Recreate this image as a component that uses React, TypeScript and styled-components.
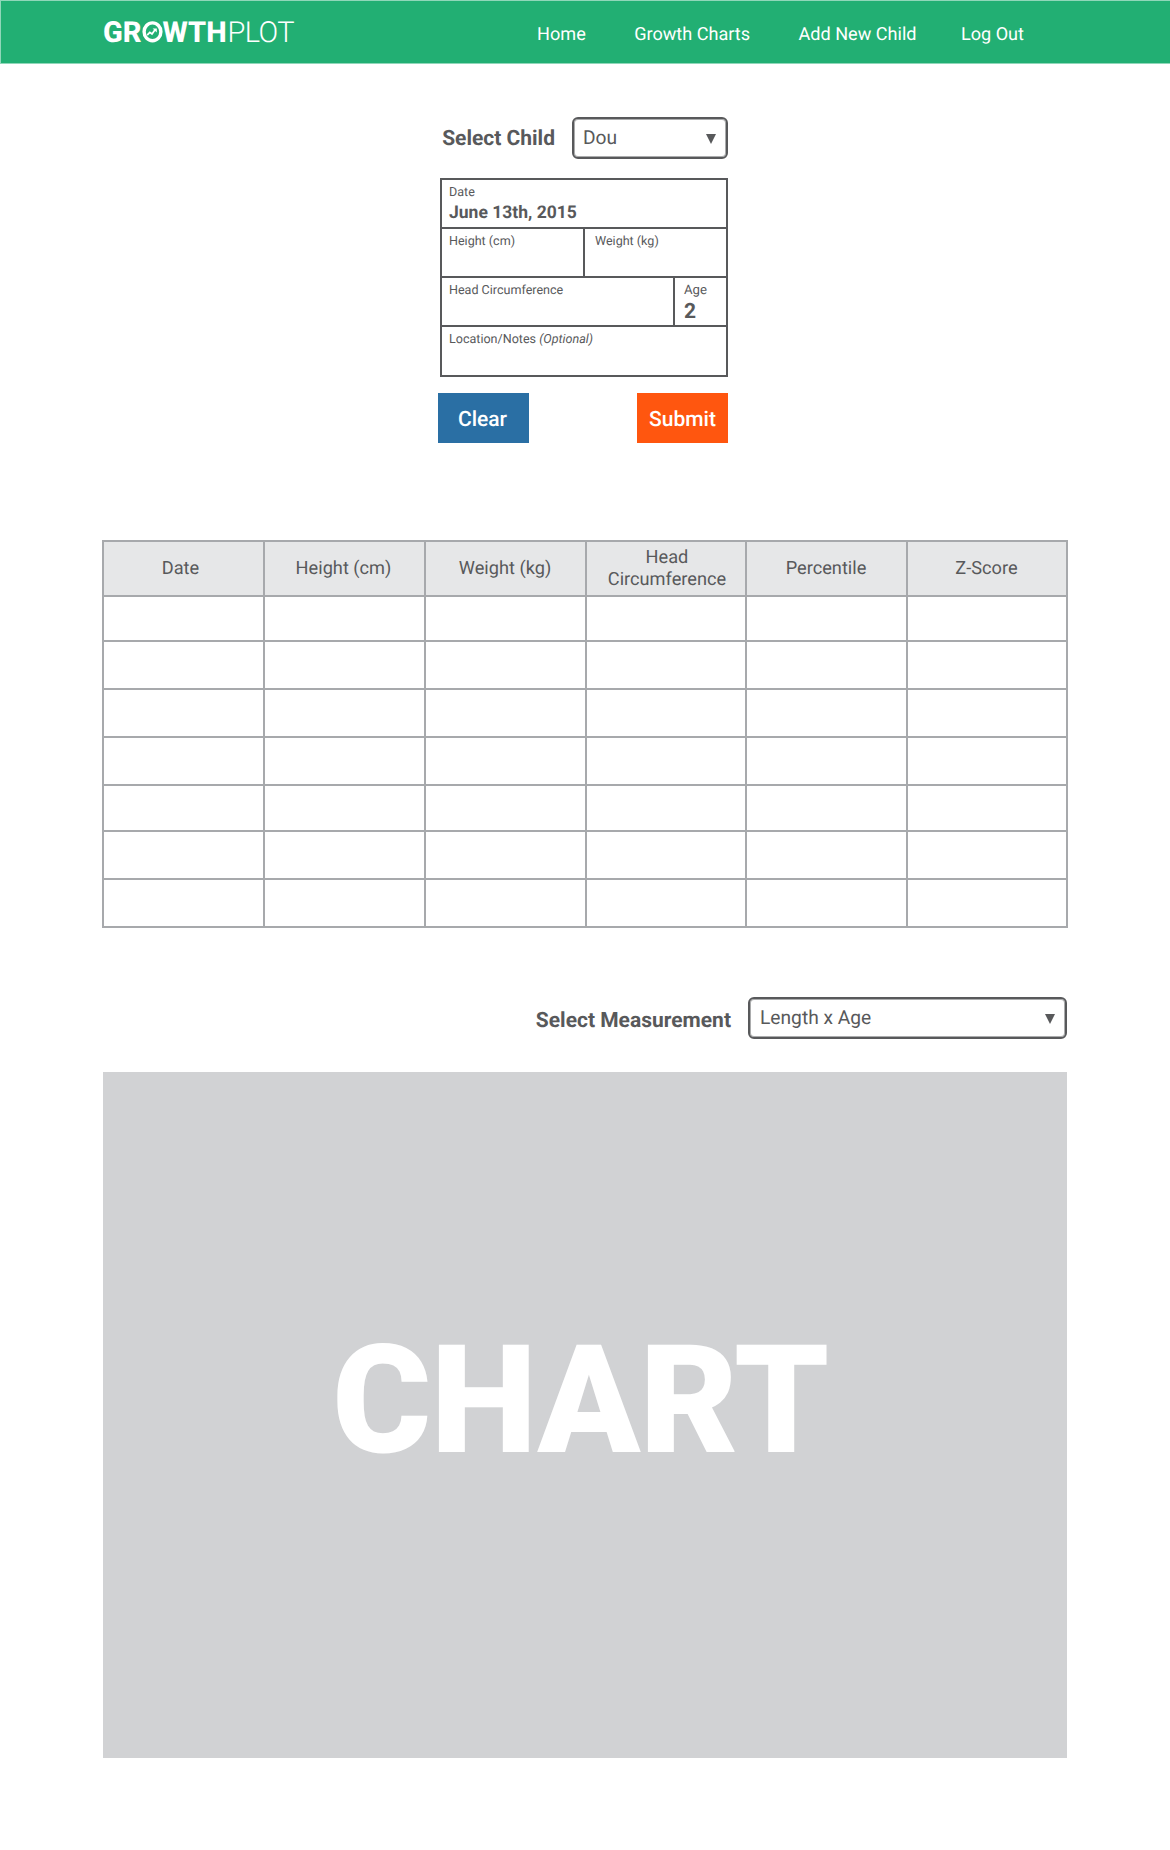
import React from "react";
import styled, { createGlobalStyle } from "styled-components";

const ink = "#58595b";
const rule = "#a7a9ac";

const GlobalStyle = createGlobalStyle`
  * { box-sizing: border-box; }
  html, body { margin: 0; padding: 0; background: #fff; }
  body {
    font-family: Roboto, "Liberation Sans", sans-serif;
    color: ${ink};
    text-rendering: geometricPrecision;
  }
`;

const Page = styled.div`
  display: flex;
  flex-direction: column;
  width: 1170px;
  height: 1850px;
`;

const Header = styled.header`
  display: flex;
  justify-content: space-between;
  align-items: flex-start;
  height: 64px;
  padding: 0 146px 0 102px;
  background: #22af73;
  border: 1px solid #90d7b9;
  border-right: 0;
  color: #fff;
`;

const Logo = styled.div`
  display: flex;
  align-items: flex-start;
  margin-top: 14px;
  font-size: 29px;
  line-height: 36px;
`;

const Strong = styled.span`
  font-weight: 800;
`;

const Thin = styled.span`
  margin-left: 1px;
  font-weight: 300;
  letter-spacing: -0.6px;
`;

const LogoMark = styled.svg`
  width: 21px;
  height: 22px;
  margin-top: 6px;
`;

const Nav = styled.nav`
  display: flex;
  gap: 48.4px;
  margin-top: 20px;
  font-size: 18.1px;
  line-height: 28px;
`;

const NavLink = styled.a`
  color: inherit;
  &:last-child { margin-left: -4px; }
`;

const Entry = styled.section`
  display: flex;
  flex-direction: column;
  width: 290px;
  margin: 53px 0 0 438px;
`;

const FieldRow = styled.div`
  display: flex;
  justify-content: flex-end;
  align-items: flex-start;
`;

const FieldLabel = styled.label<{ $top: number }>`
  margin: ${(p) => p.$top}px 17px 0 0;
  font-size: 21px;
  font-weight: 700;
  line-height: 26px;
`;

const SelectBox = styled.div<{ $width: number; $left?: number }>`
  display: flex;
  justify-content: space-between;
  width: ${(p) => p.$width}px;
  height: 42px;
  padding: 5px 10px 0 ${(p) => p.$left ?? 9}px;
  border: 2px solid ${ink};
  border-radius: 6px;
  box-shadow: inset 0 0 0 1px #58595b80;
  font-size: 19.2px;
  line-height: 27px;
`;

const Caret = styled.span`
  width: 0;
  height: 0;
  margin-top: 10px;
  border: solid transparent;
  border-width: 10px 5.5px 0;
  border-top-color: ${ink};
`;

const Form = styled.div`
  display: flex;
  flex-direction: column;
  width: 288px;
  margin: 19px 0 0 2px;
  border: 2px solid ${ink};
`;

const FormRow = styled.div`
  display: flex;
  height: 49px;
  border-bottom: 2px solid ${ink};
  &:last-child { height: 48px; border-bottom: 0; }
`;

const Field = styled.div<{ $width?: number; $left?: number }>`
  display: flex;
  flex-direction: column;
  width: ${(p) => (p.$width ? `${p.$width}px` : "auto")};
  padding: 6px 0 0 ${(p) => p.$left ?? 7}px;
  & + & { border-left: 2px solid ${ink}; }
`;

const Caption = styled.span<{ $size?: number }>`
  font-size: ${(p) => p.$size ?? 12.55}px;
  line-height: 14px;
`;

const Value = styled.span<{ $size: number; $line: number }>`
  font-size: ${(p) => p.$size}px;
  font-weight: 700;
  line-height: ${(p) => p.$line}px;
`;

const Actions = styled.div`
  display: flex;
  justify-content: space-between;
  margin-top: 16px;
`;

const Button = styled.button<{ $color: string; $shift?: number }>`
  width: 91px;
  height: 50px;
  padding: 2px ${(p) => p.$shift ?? 0}px 0 0;
  border: 0;
  background: ${(p) => p.$color};
  color: #fff;
  font: 500 21px/50px Roboto, "Liberation Sans", sans-serif;
  text-rendering: inherit;
`;

const Table = styled.div`
  display: grid;
  grid-template-columns: 161px 161px 161px 160px 161px 160px;
  grid-template-rows: 55px 45px 48px 48px 48px 46px 48px 48px;
  width: 966px;
  margin: 97px 0 0 102px;
  border: solid ${rule};
  border-width: 2px 0 0 2px;
`;

const Cell = styled.div`
  border: solid ${rule};
  border-width: 0 2px 2px 0;
`;

const HeadCell = styled(Cell)<{ $shift: number }>`
  display: flex;
  align-items: center;
  justify-content: center;
  padding: 1px ${(p) => Math.max(p.$shift, 0)}px 0 ${(p) => Math.max(-p.$shift, 0)}px;
  background: #e6e7e8;
  font-size: 18.2px;
  line-height: 22px;
  text-align: center;
  white-space: pre-line;
`;

const Measurement = styled(FieldRow)`
  width: 965px;
  margin: 69px 0 0 102px;
`;

const Chart = styled.div`
  display: flex;
  justify-content: center;
  width: 964px;
  height: 686px;
  margin: 33px 0 0 103px;
  padding: 239px 9px 0 0;
  background: #d1d2d4;
  color: #fff;
  font-size: 151px;
  font-weight: 900;
  letter-spacing: -0.6px;
  line-height: 180px;
`;

const columns = [
  { title: "Date", shift: 6 },
  { title: "Height (cm)", shift: 2 },
  { title: "Weight (kg)", shift: 1 },
  { title: "Head\nCircumference", shift: -2 },
  { title: "Percentile", shift: 1 },
  { title: "Z-Score", shift: 1 },
];

export default function App() {
  return (
    <Page>
      <GlobalStyle />
      <Header>
        <Logo>
          <Strong>GR</Strong>
          <LogoMark viewBox="0 0 21 22" fill="none" stroke="#fff">
            <ellipse cx="10.5" cy="10.8" rx="8.4" ry="8.9" strokeWidth="3.4" />
            <path d="M5.2 14.2l2.6-2.8 2.2 1.6 3-4.2" strokeWidth="1.7" />
            <path d="M10.6 7.4h4.2v4z" fill="#fff" stroke="none" />
          </LogoMark>
          <Strong>WTH</Strong>
          <Thin>PLOT</Thin>
        </Logo>
        <Nav>
          <NavLink>Home</NavLink>
          <NavLink>Growth Charts</NavLink>
          <NavLink>Add New Child</NavLink>
          <NavLink>Log Out</NavLink>
        </Nav>
      </Header>

      <Entry>
        <FieldRow>
          <FieldLabel $top={9}>Select Child</FieldLabel>
          <SelectBox $width={156}>
            <span>Dou</span>
            <Caret />
          </SelectBox>
        </FieldRow>
        <Form>
          <FormRow>
            <Field>
              <Caption>Date</Caption>
              <Value $size={17.5} $line={26}>June 13th, 2015</Value>
            </Field>
          </FormRow>
          <FormRow>
            <Field $width={141}>
              <Caption>Height (cm)</Caption>
            </Field>
            <Field $left={10}>
              <Caption>Weight (kg)</Caption>
            </Field>
          </FormRow>
          <FormRow>
            <Field $width={231}>
              <Caption>Head Circumference</Caption>
            </Field>
            <Field $left={9}>
              <Caption $size={13.2}>Age</Caption>
              <Value $size={21} $line={28}>2</Value>
            </Field>
          </FormRow>
          <FormRow>
            <Field>
              <Caption>
                Location/Notes <i>(Optional)</i>
              </Caption>
            </Field>
          </FormRow>
        </Form>
        <Actions>
          <Button $color="#2a6fa4" $shift={2}>Clear</Button>
          <Button $color="#ff560f">Submit</Button>
        </Actions>
      </Entry>

      <Table>
        {columns.map((c) => (
          <HeadCell key={c.title} $shift={c.shift}>{c.title}</HeadCell>
        ))}
        {Array.from({ length: 42 }, (_, i) => (
          <Cell key={i} />
        ))}
      </Table>

      <Measurement>
        <FieldLabel $top={11}>Select Measurement</FieldLabel>
        <SelectBox $width={319} $left={10}>
          <span>Length x Age</span>
          <Caret />
        </SelectBox>
      </Measurement>

      <Chart>CHART</Chart>
    </Page>
  );
}
